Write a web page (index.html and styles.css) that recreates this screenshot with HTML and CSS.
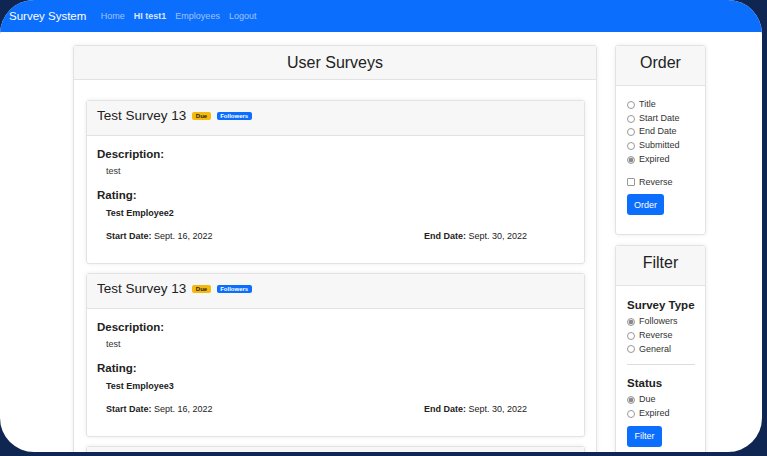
FILE: index.html
```html
<!DOCTYPE html>
<html>
<head>
<meta charset="utf-8">
<link rel="stylesheet" href="styles.css">
</head>
<body>
<div class="frame">
  <nav class="navbar">
    <span class="brand">Survey System</span>
    <a class="nav-link">Home</a>
    <a class="nav-link active">HI test1</a>
    <a class="nav-link">Employees</a>
    <a class="nav-link">Logout</a>
  </nav>
  <div class="page">
    <div class="card main-card">
      <div class="card-header main-header">User Surveys</div>
      <div class="main-body">
        <div class="card survey">
          <div class="survey-header">Test Survey 13<span class="badge due">Due</span><span class="badge followers">Followers</span></div>
          <div class="survey-body">
            <h5 class="label">Description:</h5>
            <p class="text">test</p>
            <h5 class="label rating">Rating:</h5>
            <p class="text strong">Test Employee2</p>
            <div class="dates">
              <span><b>Start Date:</b> Sept. 16, 2022</span>
              <span><b>End Date:</b> Sept. 30, 2022</span>
            </div>
          </div>
        </div>
        <div class="card survey">
          <div class="survey-header">Test Survey 13<span class="badge due">Due</span><span class="badge followers">Followers</span></div>
          <div class="survey-body">
            <h5 class="label">Description:</h5>
            <p class="text">test</p>
            <h5 class="label rating">Rating:</h5>
            <p class="text strong">Test Employee3</p>
            <div class="dates">
              <span><b>Start Date:</b> Sept. 16, 2022</span>
              <span><b>End Date:</b> Sept. 30, 2022</span>
            </div>
          </div>
        </div>
        <div class="card survey">
          <div class="survey-header empty"></div>
        </div>
      </div>
    </div>
    <div class="sidebar">
      <div class="card side-card">
        <div class="card-header side-header">Order</div>
        <div class="side-body">
          <div class="opt"><span class="radio"></span>Title</div>
          <div class="opt"><span class="radio"></span>Start Date</div>
          <div class="opt"><span class="radio"></span>End Date</div>
          <div class="opt"><span class="radio"></span>Submitted</div>
          <div class="opt"><span class="radio checked"></span>Expired</div>
          <div class="opt reverse"><span class="check"></span>Reverse</div>
          <button class="btn order-btn">Order</button>
        </div>
      </div>
      <div class="card side-card">
        <div class="card-header side-header">Filter</div>
        <div class="side-body">
          <h5 class="label side-label first">Survey Type</h5>
          <div class="opt"><span class="radio checked"></span>Followers</div>
          <div class="opt"><span class="radio"></span>Reverse</div>
          <div class="opt"><span class="radio"></span>General</div>
          <hr class="sep">
          <h5 class="label side-label">Status</h5>
          <div class="opt"><span class="radio checked"></span>Due</div>
          <div class="opt"><span class="radio"></span>Expired</div>
          <button class="btn filter-btn">Filter</button>
        </div>
      </div>
    </div>
  </div>
</div>
</body>
</html>
```

FILE: styles.css
```css
html, body {
  margin: 0;
  padding: 0;
  background: #0f2552;
  height: 456px;
  overflow: hidden;
}
body {
  font-family: "Liberation Sans", Arial, sans-serif;
  color: #212529;
}
.frame {
  width: 762px;
  height: 452px;
  background: #fff;
  border-radius: 34px;
  overflow: hidden;
}
.navbar {
  height: 32px;
  background: #0b6efd;
  display: flex;
  align-items: center;
  padding-left: 9px;
}
.brand {
  color: #fff;
  font-size: 11.5px;
  margin-right: 10px;
}
.nav-link {
  color: rgba(255,255,255,0.6);
  font-size: 9px;
  padding: 0 4.5px;
}
.nav-link.active {
  color: rgba(255,255,255,0.85);
  font-weight: bold;
}
.page {
  display: flex;
  align-items: flex-start;
  padding: 13px 0 0 73px;
  gap: 18px;
}
.card {
  background: #fff;
  border: 1px solid #e3e3e3;
  border-radius: 3px;
  box-shadow: 0 0 4px rgba(0,0,0,0.08);
}
.card-header {
  background: #f7f7f7;
  border-bottom: 1px solid #e3e3e3;
  text-align: center;
  font-size: 16px;
  color: #222;
}
.main-card {
  width: 522px;
}
.main-header {
  height: 33px;
  line-height: 33px;
}
.main-body {
  padding: 20px 11px 0 12px;
}
.survey {
  margin-bottom: 9px;
}
.survey-header {
  background: #f7f7f7;
  border-bottom: 1px solid #e3e3e3;
  height: 34px;
  line-height: 30px;
  padding-left: 10px;
  font-size: 13.5px;
  color: #222;
}
.badge {
  display: inline-block;
  font-size: 6px;
  font-weight: bold;
  line-height: 8px;
  padding: 0 3.5px;
  border-radius: 2px;
  vertical-align: 2px;
  margin-left: 6px;
}
.due {
  background: #f5b90b;
  color: #222;
}
.followers {
  background: #0b6efd;
  color: #fff;
}
.survey-body {
  padding: 11px 10px 21px 10px;
}
.label {
  margin: 0;
  font-size: 11.5px;
  line-height: 14px;
  font-weight: bold;
  color: #222;
  white-space: nowrap;
}
.text {
  margin: 4px 0 0 9px;
  font-size: 9px;
  line-height: 12px;
  color: #333;
}
.text.strong {
  font-weight: bold;
  color: #222;
  margin-top: 5px;
}
.rating {
  margin-top: 11px;
}
.dates {
  margin-top: 11px;
  padding-left: 9px;
  display: grid;
  grid-template-columns: 318px 1fr;
  font-size: 9px;
  line-height: 12px;
  color: #222;
}
.sidebar {
  width: 91px;
  display: flex;
  flex-direction: column;
  gap: 10px;
}
.side-header {
  height: 39px;
  line-height: 34px;
}
.side-body {
  padding: 12px 10px 19px 11px;
}
.opt {
  display: flex;
  align-items: center;
  font-size: 9px;
  line-height: 13.7px;
  color: #333;
  white-space: nowrap;
}
.radio, .check {
  width: 6px;
  height: 6px;
  border: 1px solid #999;
  border-radius: 50%;
  margin-right: 4px;
  box-sizing: content-box;
  background: #fff;
}
.radio.checked {
  background: radial-gradient(circle, #8a8a8a 0 2px, #e8e8e8 2.5px);
}
.check {
  border-radius: 1px;
}
.reverse {
  margin-top: 9px;
}
.btn {
  display: block;
  background: #0b6efd;
  color: #fff;
  border: none;
  border-radius: 3px;
  font-family: "Liberation Sans", Arial, sans-serif;
  font-size: 9px;
  height: 21px;
  padding: 0 6px;
}
.order-btn {
  margin-top: 5px;
  width: 37px;
}
.filter-btn {
  margin-top: 5px;
  width: 35px;
}
.side-label {
  margin-top: 5px;
  margin-bottom: 3px;
}
.side-label.first {
  margin-top: 0;
}
.sep {
  border: none;
  border-top: 1px solid #ddd;
  margin: 8px 0 11px 0;
}
```
